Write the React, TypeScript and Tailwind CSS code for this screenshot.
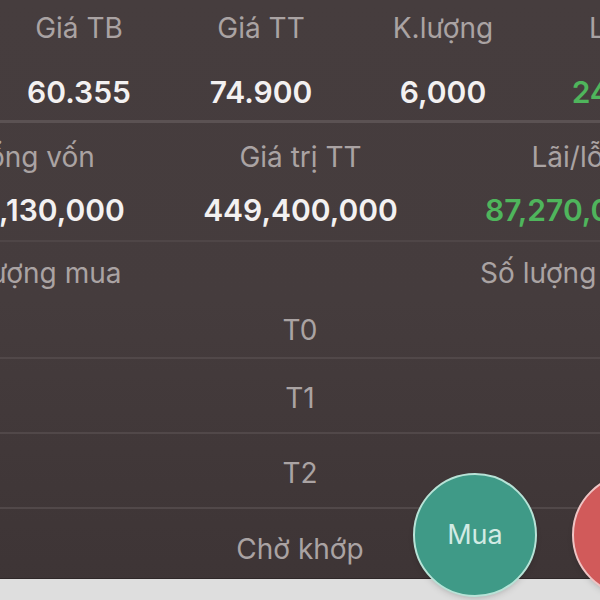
const TOP = [
  { label: "Giá TB", value: "60.355", green: false },
  { label: "Giá TT", value: "74.900", green: false },
  { label: "K.lượng", value: "6,000", green: false },
  { label: "Lãi/lỗ", value: "24.10%", green: true },
]

const MID = [
  { label: "Tổng vốn", value: "362,130,000", green: false },
  { label: "Giá trị TT", value: "449,400,000", green: false },
  { label: "Lãi/lỗ", value: "87,270,000", green: true },
]

const ROWS = [
  { name: "T0", h: "h-[55px]", pad: "pt-[0px]" },
  { name: "T1", h: "h-[73px]", pad: "pt-[4px]" },
  { name: "T2", h: "h-[73px]", pad: "pt-[4px]" },
]

export default function App() {
  return (
    <div
      className="relative w-[600px] h-[600px] overflow-hidden bg-gradient-to-b from-[#463d3e] via-[#453c3d] to-[#3d3435]"
      style={{ fontFamily: "Inter, 'Noto Sans', sans-serif" }}
    >
      <div className="flex flex-col">
        <div className="grid grid-cols-4 w-[728px] ml-[-12px]">
          {TOP.map(({ label }) => (
            <div key={label} className="h-[60px] flex items-center justify-center pb-[4px] text-[28px] text-[#aaa3a3] whitespace-nowrap">
              {label}
            </div>
          ))}
          {TOP.map(({ value, green }) => (
            <div
              key={value}
              className={`h-[60px] flex items-center justify-center pt-[4px] text-[30px] font-semibold whitespace-nowrap ${green ? "text-[#4fb55c]" : "text-[#f3f1f1]"}`}
            >
              {value}
            </div>
          ))}
        </div>
        <div className="h-[3px] bg-[#5b5253]" />

        <div className="grid grid-cols-3 w-[801px] ml-[-100px]">
          {MID.map(({ label }, i) => (
            <div key={i} className="h-[64px] flex items-center justify-center pt-[4px] text-[28px] text-[#aaa3a3] whitespace-nowrap">
              {label}
            </div>
          ))}
          {MID.map(({ value, green }) => (
            <div
              key={value}
              className={`h-[46px] flex items-center justify-center text-[30px] font-semibold whitespace-nowrap ${green ? "text-[#4fb55c]" : "text-[#f3f1f1]"}`}
            >
              {value}
            </div>
          ))}
        </div>
        <div className="h-[7px]" />
        <div className="h-[2px] bg-[#4f4647]" />

        <div className="grid grid-cols-3 w-[804px] ml-[-103px] h-[60px] items-center pt-[2px] text-[28px] text-[#aaa3a3] whitespace-nowrap">
          <div className="text-center">Số lượng mua</div>
          <div />
          <div className="text-center">Số lượng bán</div>
        </div>

        {ROWS.map(({ name, h, pad }) => (
          <div key={name}>
            <div className={`${h} ${pad} flex items-center justify-center text-[28px] text-[#aaa3a3]`}>{name}</div>
            <div className="h-[2px] bg-[#514849]" />
          </div>
        ))}

        <div className="h-[69px] flex items-center justify-center pt-[10px] text-[28px] text-[#aaa3a3]">Chờ khớp</div>
        <div className="h-[22px] bg-[#dedede] border-t border-[#2e2728]" />
      </div>

      <div className="absolute left-[413px] top-[473px] w-[124px] h-[124px] rounded-full border-2 border-[#b7e3d7] bg-[#3f9a87] shadow-md flex items-center justify-center text-[27px] text-[#d2ebe4]">
        Mua
      </div>
      <div className="absolute left-[572px] top-[473px] w-[124px] h-[124px] rounded-full border-2 border-[#eec4c4] bg-[#d15a5a] shadow-md flex items-center justify-center text-[27px] text-[#f5dede]">
        Bán
      </div>
    </div>
  )
}
